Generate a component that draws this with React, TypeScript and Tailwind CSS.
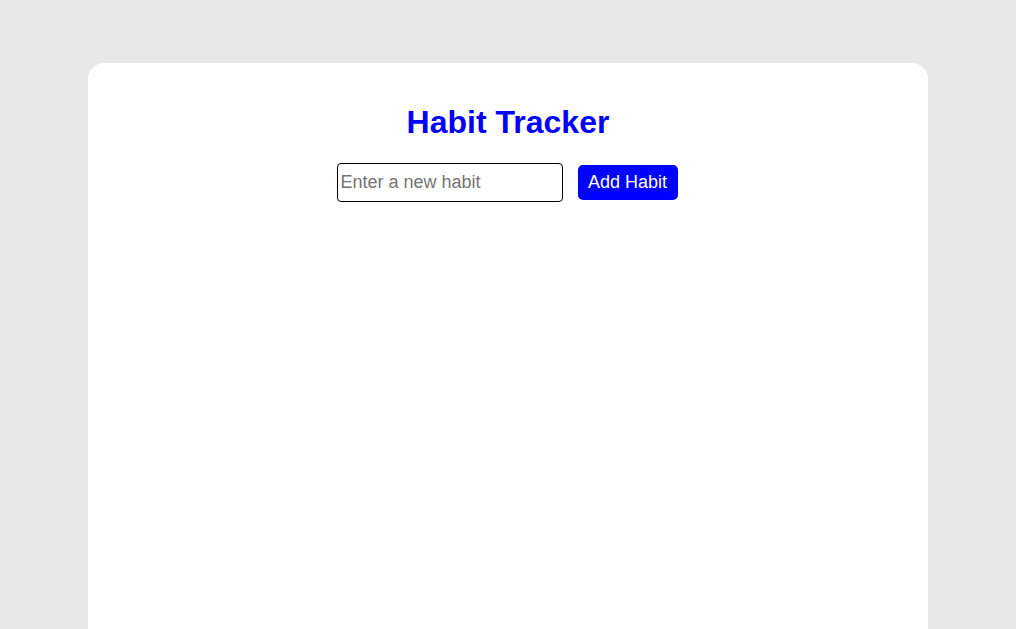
import React from "react";

export default function App() {
  return (
    <div
      className="min-h-screen bg-[#e8e8e8] pt-[63px]"
      style={{ fontFamily: '"Liberation Sans", Arial, sans-serif' }}
    >
      <div className="mx-auto w-[840px] min-h-[700px] rounded-[16px] bg-white p-[20px] text-center">
        <h1 className="mt-[14.5px] mb-[17.5px] text-[32px] font-bold leading-normal text-[#0000ff]">
          Habit Tracker
        </h1>
        <div className="flex items-center justify-center gap-[15px] pr-[2px]">
          <input
            type="text"
            placeholder="Enter a new habit"
            className="h-[39px] w-[226px] rounded-[4px] border border-black px-[3px] text-[18px] text-black outline-none placeholder:text-[#757575]"
          />
          <button className="h-[35px] w-[100px] rounded-[5px] bg-[#0000ff] text-[18px] text-white">
            Add Habit
          </button>
        </div>
      </div>
    </div>
  );
}
